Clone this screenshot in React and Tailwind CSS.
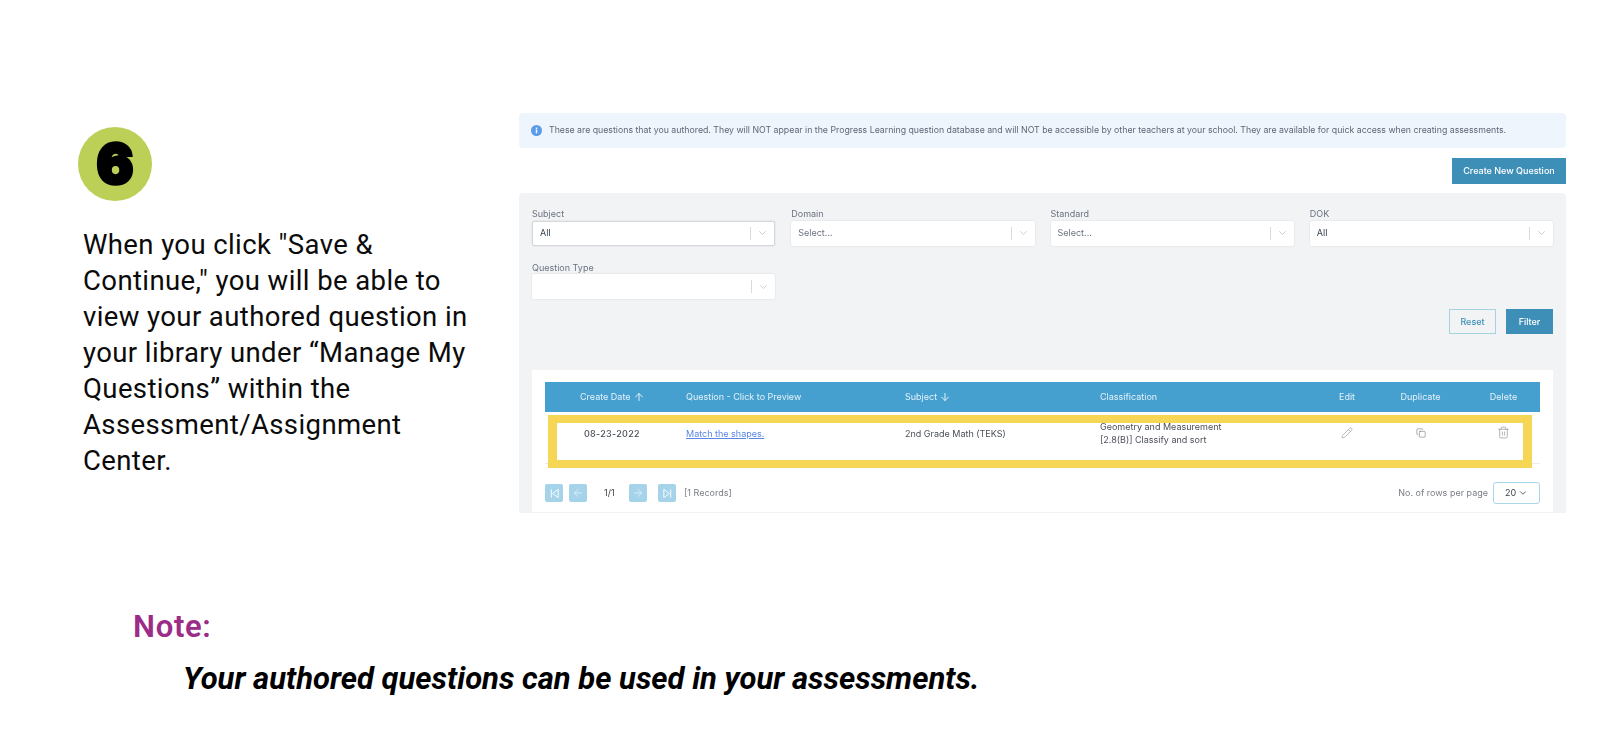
import { Pencil, Copy, Trash2, ArrowUp, ArrowDown, ArrowLeft, ArrowRight, ChevronDown } from 'lucide-react';

const selectsTop = [
  { label: 'Subject', value: 'All', focus: true },
  { label: 'Domain', value: 'Select...' },
  { label: 'Standard', value: 'Select...' },
  { label: 'DOK', value: 'All' },
];

const GRID = 'grid grid-cols-[141px_219px_195px_220px_54px_93px_1fr]';

function Select({ label, value, focus }) {
  return (
    <div>
      <div className="text-[9px] leading-[13px] text-[#6b7280]">{label}</div>
      <div className={`mt-[0.5px] flex h-[25px] items-center rounded-[2px] bg-white pl-[7px] shadow-[0_0_2px_rgba(0,0,0,0.12)] ${focus ? 'border border-[#d5d7da]' : ''}`}>
        <span className={`flex-1 text-[9px] ${value === 'All' ? 'text-[#374151]' : 'text-[#6b7280]'}`}>{value}</span>
        <span className="h-[13px] w-px bg-[#d8dadd]" />
        <ChevronDown className="mx-[5px] h-[12px] w-[13px] text-[#b5b8bd]" strokeWidth={1.3} />
      </div>
    </div>
  );
}

function PageBtn({ children }) {
  return (
    <div className="flex h-[18px] w-[18px] items-center justify-center rounded-[2px] bg-[#a5d3e9] text-white">
      {children}
    </div>
  );
}

function EdgeIcon({ flip }) {
  return (
    <svg viewBox="0 0 12 12" className={`h-[11px] w-[11px] ${flip ? 'scale-x-[-1]' : ''}`} fill="none" stroke="currentColor" strokeWidth="1">
      <path d="M2.5 1.5v9M10 1.5 4 6l6 4.5z" />
    </svg>
  );
}

export default function App() {
  return (
    <div className="h-[730px] w-[1610px] overflow-hidden bg-white font-['Inter',sans-serif]">
      <div className="flex pt-[113px]">
        {/* Step text */}
        <div className="w-[519px] shrink-0 pl-[78px] pt-[14px]">
          <div className="flex h-[74px] w-[74px] items-center justify-center rounded-full bg-[#bcd057]">
            <span className="text-[54px] font-black leading-none text-black [-webkit-text-stroke:3.5px_black]">6</span>
          </div>
          <p className="ml-[5px] mt-[26px] w-[425px] font-['Roboto',sans-serif] text-[27.5px] leading-[36px] tracking-[0.4px] text-[#0b0b0b]">
            When you click "Save &amp;<br />
            Continue," you will be able to<br />
            view your authored question in<br />
            your library under “Manage My<br />
            Questions” within the<br />
            Assessment/Assignment<br />
            Center.
          </p>
        </div>

        {/* Screenshot of the question library */}
        <div className="relative w-[1047px] shrink-0">
          <div className="blur-[0.55px]">
            <div className="flex h-[35px] items-center rounded-[4px] bg-[#eef5fd] pl-[12px]">
              <svg viewBox="0 0 12 12" className="h-[11px] w-[11px] shrink-0">
                <circle cx="6" cy="6" r="6" fill="#5a9bec" />
                <rect x="5.2" y="5" width="1.6" height="4" fill="#fff" />
                <rect x="5.2" y="2.8" width="1.6" height="1.5" fill="#fff" />
              </svg>
              <span className="ml-[7px] whitespace-nowrap text-[8.75px] text-[#5f6673]">
                These are questions that you authored. They will NOT appear in the Progress Learning question database and will NOT be accessible by other teachers at your school. They are available for quick access when creating assessments.
              </span>
            </div>

            <div className="mt-[10px] flex justify-end">
              <div className="flex h-[26px] w-[114px] items-center justify-center bg-[#3d8fb8] text-[9px] font-medium text-white">
                Create New Question
              </div>
            </div>

            <div className="mt-[9px] h-[320px] rounded-t-[4px] bg-[#f2f3f5] px-[13px] pt-[14px]">
              <div className="grid grid-cols-4 gap-x-[16px] gap-y-[15px]">
                {selectsTop.map(s => <Select key={s.label} {...s} />)}
                <Select label="Question Type" value="" />
              </div>

              <div className="mt-[10px] flex justify-end gap-[10px]">
                <div className="flex h-[25px] w-[47px] items-center justify-center border border-[#a5d3e4] text-[9px] font-medium text-[#3d8fb8]">Reset</div>
                <div className="flex h-[25px] w-[47px] items-center justify-center bg-[#3d8fb8] text-[9px] font-medium text-white">Filter</div>
              </div>

              <div className="mt-[36px] h-[142px] bg-white px-[13px] pt-[12px]">
                <div className={`${GRID} h-[30px] items-center bg-[#459fcf] text-[9px] text-[#e4f2f9]`}>
                  <div className="flex items-center pl-[35px]">
                    Create Date <ArrowUp className="ml-[2px] h-[14px] w-[12px]" strokeWidth={2} />
                  </div>
                  <div>Question - Click to Preview</div>
                  <div className="flex items-center">
                    Subject <ArrowDown className="ml-[2px] h-[14px] w-[12px]" strokeWidth={2} />
                  </div>
                  <div>Classification</div>
                  <div className="text-center">Edit</div>
                  <div className="text-center">Duplicate</div>
                  <div className="text-center">Delete</div>
                </div>

                <div className={`${GRID} h-[52px] border-b border-[#e8eaec] pt-[9px] text-[9px] text-[#4b5058]`}>
                  <div className="pl-[39px] pt-[6px] font-medium tracking-[0.3px]">08-23-2022</div>
                  <div className="pt-[6px] text-[#5b86e6] underline">Match the shapes.</div>
                  <div className="pt-[6px]">2nd Grade Math (TEKS)</div>
                  <div className="-mt-[1px] leading-[13px]">
                    Geometry and Measurement<br />[2.8(B)] Classify and sort
                  </div>
                  <div className="flex justify-center pt-[6px]"><Pencil className="h-[12px] w-[12px] text-[#8b8f96]" strokeWidth={1.2} /></div>
                  <div className="flex justify-center pt-[7px]"><Copy className="h-[10px] w-[10px] text-[#6f747b]" strokeWidth={1.4} /></div>
                  <div className="flex justify-center pt-[5px]"><Trash2 className="h-[13px] w-[13px] text-[#9a9da2]" strokeWidth={1.4} /></div>
                </div>

                <div className="mt-[18px] flex items-center text-[9px] text-[#7a7e85]">
                  <PageBtn><EdgeIcon /></PageBtn>
                  <div className="ml-[6px]"><PageBtn><ArrowLeft className="h-[12px] w-[12px]" strokeWidth={1.2} /></PageBtn></div>
                  <span className="ml-[17px] w-[25px] text-[#3f444b]">1/1</span>
                  <PageBtn><ArrowRight className="h-[12px] w-[12px]" strokeWidth={1.2} /></PageBtn>
                  <div className="ml-[11px]"><PageBtn><EdgeIcon flip /></PageBtn></div>
                  <span className="ml-[8px]">[1 Records]</span>
                  <span className="ml-auto">No. of rows per page</span>
                  <div className="ml-[5px] flex h-[22px] w-[47px] items-center justify-center rounded-[3px] border border-[#a9d6ea] text-[#3f444b]">
                    20 <ChevronDown className="ml-[2px] h-[10px] w-[10px]" strokeWidth={2} />
                  </div>
                </div>
              </div>
            </div>
          </div>

          {/* Yellow highlight laid over the row */}
          <div className="absolute left-[29px] top-[302px] h-[53px] w-[984px] border-x-[9px] border-y-[8px] border-[#f6d655]" />
        </div>
      </div>

      {/* Note */}
      <div className="mt-[97px] pl-[133px] font-['Roboto',sans-serif]">
        <div className="text-[31px] font-semibold leading-[34px] tracking-[0.7px] text-[#9b2c87]">Note:</div>
        <div className="ml-[50px] mt-[16px] text-[31px] font-bold italic leading-[38px] text-black">
          Your authored questions can be used in your assessments.
        </div>
      </div>
    </div>
  );
}
